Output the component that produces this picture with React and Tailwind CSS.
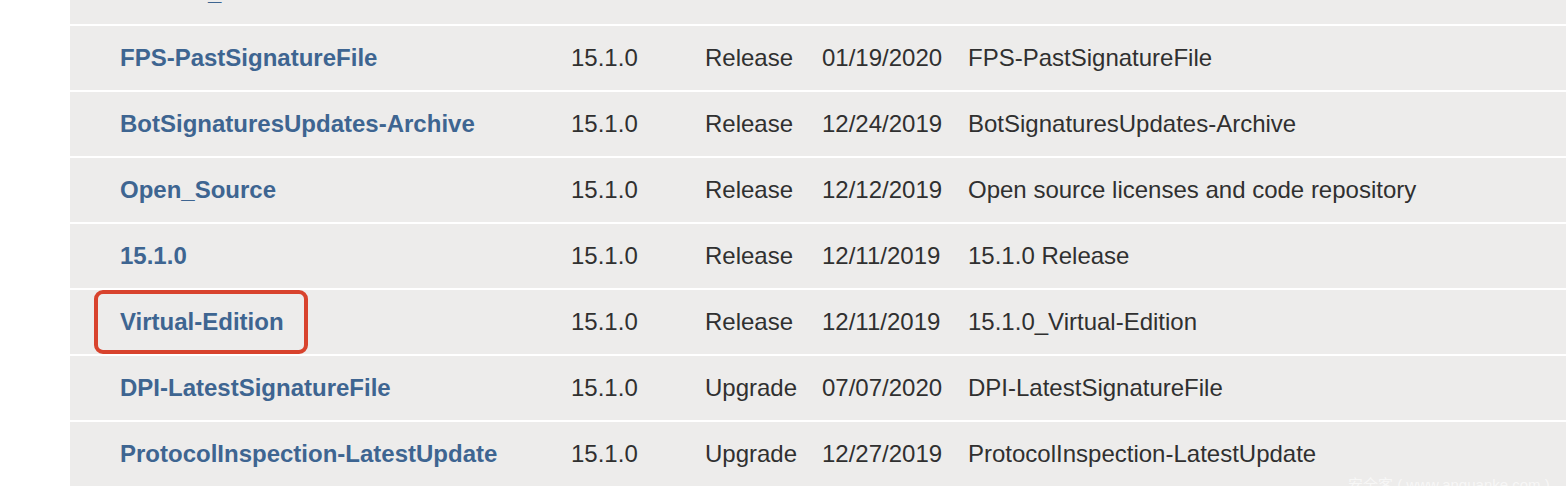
import React from 'react'

const rows = [
    { name: 'Archive_Files', ver: '15.1.0', type: 'Release', date: '01/22/2020', desc: 'Archive-Files' },
    { name: 'FPS-PastSignatureFile', ver: '15.1.0', type: 'Release', date: '01/19/2020', desc: 'FPS-PastSignatureFile' },
    { name: 'BotSignaturesUpdates-Archive', ver: '15.1.0', type: 'Release', date: '12/24/2019', desc: 'BotSignaturesUpdates-Archive' },
    { name: 'Open_Source', ver: '15.1.0', type: 'Release', date: '12/12/2019', desc: 'Open source licenses and code repository' },
    { name: '15.1.0', ver: '15.1.0', type: 'Release', date: '12/11/2019', desc: '15.1.0 Release' },
    { name: 'Virtual-Edition', ver: '15.1.0', type: 'Release', date: '12/11/2019', desc: '15.1.0_Virtual-Edition', marked: true },
    { name: 'DPI-LatestSignatureFile', ver: '15.1.0', type: 'Upgrade', date: '07/07/2020', desc: 'DPI-LatestSignatureFile' },
    { name: 'ProtocolInspection-LatestUpdate', ver: '15.1.0', type: 'Upgrade', date: '12/27/2019', desc: 'ProtocolInspection-LatestUpdate' },
]

export default function App() {
    return (
        <div className="relative h-[504px] w-[1566px] overflow-hidden bg-white text-[24px] text-[#303030]" style={{ fontFamily: '"Liberation Sans", Arial, sans-serif' }}>
            <div className="ml-[70px] -mt-[40px] flex flex-col gap-[2px]">
                {rows.map((r) => (
                    <div key={r.name} className="relative grid h-[64px] grid-cols-[451px_134px_117px_146px_1fr] items-center bg-[#edeceb] pl-[50px]">
                        <a href="#" className="font-bold text-[#3e6591]">{r.name}</a>
                        <span>{r.ver}</span>
                        <span>{r.type}</span>
                        <span>{r.date}</span>
                        <span className="whitespace-nowrap">{r.desc}</span>
                        {r.marked && (
                            <div className="absolute left-[24px] top-0 h-[64px] w-[214px] rounded-[9px] border-[4px] border-[#d8432d]"></div>
                        )}
                    </div>
                ))}
            </div>
            <div className="absolute left-[1348px] top-[474px] whitespace-nowrap text-[15px] text-white/60" style={{ fontFamily: '"Liberation Sans", "Noto Sans CJK SC", sans-serif' }}>
                安全客 ( www.anquanke.com )
            </div>
        </div>
    )
}
